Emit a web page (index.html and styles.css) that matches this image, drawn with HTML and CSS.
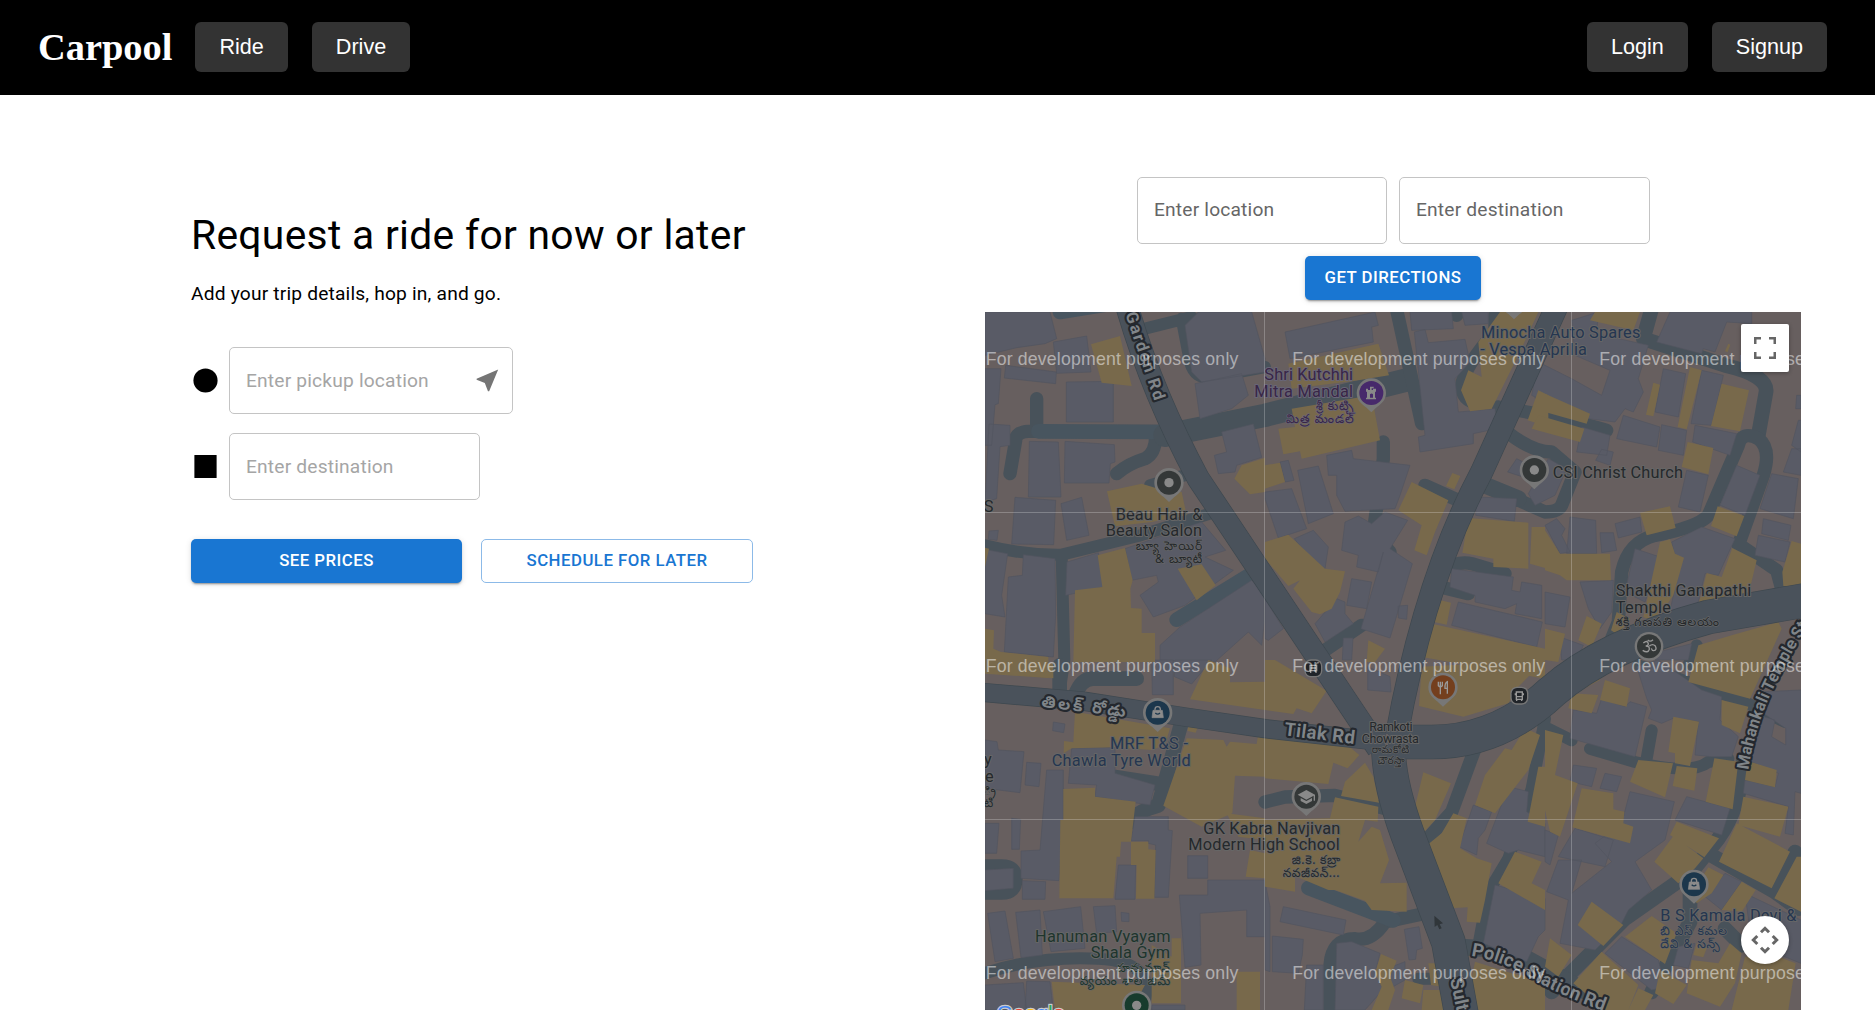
FILE: index.html
```html
<!DOCTYPE html>
<html lang="en">
<head>
<meta charset="utf-8">
<title>Carpool</title>
<link rel="stylesheet" href="styles.css">
</head>
<body>
<header class="navbar">
  <div class="nav-group">
    <h1 class="brand">Carpool</h1>
    <button class="nav-btn">Ride</button>
    <button class="nav-btn">Drive</button>
  </div>
  <div class="nav-group">
    <button class="nav-btn">Login</button>
    <button class="nav-btn">Signup</button>
  </div>
</header>
<main class="page">
  <section class="request">
    <h2 class="title">Request a ride for now or later</h2>
    <p class="subtitle">Add your trip details, hop in, and go.</p>
    <div class="field-row">
      <svg class="marker" viewBox="0 0 24 24"><circle cx="12" cy="12" r="10"/></svg>
      <div class="field field-pickup"><span class="placeholder">Enter pickup location</span>
        <svg class="near-me" viewBox="0 0 24 24"><path d="M21 3 3 10.53v.98l6.84 2.65L12.48 21h.98L21 3z"/></svg>
      </div>
    </div>
    <div class="field-row">
      <svg class="marker" viewBox="0 0 24 24"><path d="M2.8 2.5h18.4v19H2.8z"/></svg>
      <div class="field"><span class="placeholder">Enter destination</span></div>
    </div>
    <div class="actions">
      <button class="btn btn-filled">See prices</button>
      <button class="btn btn-outlined">Schedule for later</button>
    </div>
  </section>
  <section class="directions">
    <div class="direction-fields">
      <div class="field field-from"><span class="label">Enter location</span></div>
      <div class="field"><span class="label">Enter destination</span></div>
    </div>
    <button class="btn btn-filled btn-directions">Get directions</button>
    <div class="map">
      <svg class="map-canvas" viewBox="0 0 2448 2094">
        <defs>
          <path id="pin" d="M0-44a44 44 0 0 0-44 44c0 22 14 32 28 43L0 58 16 43C30 32 44 22 44 0A44 44 0 0 0 0-44z"/>
          <path id="bag" d="M-14-7h28l3 22h-34z"/>
          <path id="bag-handle" d="M-8-7v-3a8 8 0 0 1 16 0v3"/>
          <path id="police-line" d="M1458 1932Q1550 1945 1640 2000T1920 2120"/>
          <path id="mahankali-line" d="M2290 1374Q2310 1240 2370 1119T2520 860"/>
        </defs>

        <g class="lane">
          <path class="w40" d="M155 260V350M75 485L92 385Q92 360 130 358H540M395 485Q430 455 480 440Q512 425 512 370"/>
          <path class="w44 bright" d="M160 358L525 360M225 0L380-25M575 923L800 785"/>
          <path class="w70" d="M540 370L840 310L1140 235L1260 205"/>
          <path class="w36" d="M480 50L620 15M590 20L615 150Q630 205 680 195L840 165M495 520L600 490M0 700Q120 730 230 728L460 672L690 600M230 728L238 1044L225 1130"/>
          <path class="w40" d="M1232-20L1310 335M1195 390V440L1165 660L1215 720M1320 520L1420 565M1415-20V10M1530 10V60Q1440 160 1430 220Q1430 265 1480 275M1020 1015L1130 940"/>
          <path class="w40" d="M1560 355Q1640 420 1700 420L1770 480L1730 580Q1720 600 1680 600L1490 515M1540 285Q1750 320 1865 355M1345 820L1450 845M1370 775Q1420 745 1460 755L1560 785"/>
          <path class="w50" d="M1490 515L1600 560"/>
          <path class="w44" d="M2000-10L1975 80L2220 160Q2350 190 2343 240L2320 370M2180 1000"/>
          <path class="w40" d="M2260 700L2335 490Q2360 410 2320 380Q2270 355 2260 400L2170 610Q2140 645 2010 670Q1930 690 1910 780L1900 930L1860 1030M2265 700L2375 775L2390 830"/>
          <path class="w36" d="M2110 1060L2135 1000M1960 1060L2080 1100L2280 1170L2400 1230"/>
          <path class="w44" d="M224 1060V1150M270 1150Q290 1095 330 1100H455M590 1230L520 1480Q450 1500 440 1530M520 1415L390 1395"/>
          <path class="w36" d="M0 1660H50Q95 1660 95 1700Q95 1745 50 1745H0M-20 1990Q150 1930 340 1940T470 2094"/>
          <path class="w40" d="M840 1470L900 1455L1050 1450L1200 1490M1470 1310L1400 1500L1310 1600M1035 2094V1960Q1040 1880 1110 1880Q1160 1890 1200 1830L1340 1800"/>
          <path class="w44 bright" d="M970 1728L1225 1825"/>
          <path class="w36" d="M1680 1245L1760 1285M1815 1310L1950 1350Q2120 1390 2170 1350L2230 1340M2000 1255L1985 1340M1680 1220L1640 1430L1570 1640L1510 1740L1480 1900M1300 2000H1390"/>
          <path class="w44" d="M2275 1340Q2270 1480 2200 1580L2120 1680L1920 1820L1750 1990L1700 2040M2180 1630L2370 1740L2440 1790M2370 1740L2430 1620M2115 1700V1830L2000 2040M2220 1850L2270 1900"/>
          <path class="w50" d="M1430 1905L1580 1915L1700 1980L1900 2094"/>
        </g>

        <g class="grey">
          <path d="M0 0H195L215 80 180 95 95 107 0 130ZM205 90L305 72 318 180 215 184ZM62 160L214 180 212 215 58 198ZM0 170H48L40 275 30 278 20 400 0 400ZM244 210L385 208V330H244ZM12 336L75 340V400L45 404 35 560 0 570ZM133 388L220 390 228 555H130ZM240 388L388 398 390 450 376 455 372 513H238ZM90 556L212 565 206 698 80 696ZM228 575L290 556 312 670 245 685ZM12 657L40 655 36 685 10 682ZM0 712L68 725 50 850 60 915 0 905ZM115 728L210 740 212 910 205 1035 58 1020 70 795 112 790ZM246 750L340 722 356 825 242 850ZM420 710L650 630 722 715 660 735 745 775 690 815 640 850 600 880 505 915 465 850 520 810 515 790 440 805ZM600 40L640 0H800L840 140 840 180 650 210 620 180ZM630 215L770 185 790 250 740 290 645 320ZM710 360L805 336 830 436 755 460 750 480 700 485 688 430 725 420ZM585 945L800 805 838 840V930L830 1000 790 960 690 1050 525 1044V1000Z"/>
          <path transform="translate(840)" d="M60 60L330 0 340 40 320 45 325 90 75 140ZM435 0H560L565 50 440 55ZM590 0H670V35L600 40ZM448 60L480 52 490 92 600 82 615 150 570 200 580 300 690 290 695 350 625 365V395L465 420 460 375 480 370ZM185 430L260 415 265 440 435 460 405 550 390 590 240 598 215 550V490H190ZM0 540L80 530 125 650 40 678 0 560ZM98 475L160 462 205 605 130 635ZM45 450L70 445 87 505 60 510ZM240 630L280 612 320 635 360 600 428 625 375 710 442 755 375 978 288 950 355 720 340 780 275 765 280 730 230 715ZM88 680L145 655 190 705 180 770 160 775ZM260 800L320 810 305 890 245 880ZM215 860L240 870V905L265 935 180 990 150 935ZM400 882L428 880 425 922 400 918ZM235 978H264L260 1044H232ZM0 860L55 950 10 985 0 980ZM635 555L755 560 748 628 632 610ZM560 770L745 795 740 835 765 840 770 810 830 820V920L750 905 755 875 720 890 630 870V850L555 825ZM580 870L832 930 815 1005 560 940ZM755 440L815 470 790 500 728 480ZM795 180H840V290L815 280Z"/>
          <path transform="translate(1680)" d="M80 25L160 0 155 65 310 100 280 200 295 240 265 300 240 290 210 330 130 320 40 290-40 250-20 150 80 200 170 250 195 175 90 130ZM375 0L620 0V35L545 30 510 120 475 110 470 125 335 90ZM355 170L422 185 400 315 330 300ZM470 175L535 190 500 340 438 335ZM235 310L345 345 335 405 215 380ZM350 338L425 355 415 430 340 415ZM450 340L575 365 555 430 443 390ZM110 345L195 370 185 430 95 420ZM170 412L205 420 195 460 152 445ZM10 440L65 470 30 550-30 580-50 545ZM425 475L490 490 465 600 400 585ZM575 460L645 490 600 610 525 580ZM680 485L760 500 745 620 645 590ZM755 250H768V290H752ZM760 325H768V420L740 400ZM740 410H768V490L715 480ZM655 620L738 640 730 685 650 665ZM640 670L735 690 720 750 630 730ZM0 640L35 620 60 650 50 670 75 720 45 725ZM75 615L152 625 155 725H65ZM165 662H205L215 715 170 722ZM210 635L285 615 290 660 220 678ZM270 710L345 735 300 870 240 840ZM380 690L470 645 570 680 520 790 480 785 455 890 370 920 400 780ZM0 840L75 855 60 945 0 935ZM105 810L205 805 200 900 165 950 130 890ZM45 975L115 1000 95 1044H50ZM340 1020L440 995 430 1044H330Z"/>
          <path transform="translate(0 1044)" d="M205 186L240 192 236 218 203 212ZM0 240L36 245 40 270 117 275 105 398 0 385ZM125 307L168 310 162 380 120 375ZM185 330H235V475L222 662 108 655V573L165 570ZM260 265L390 262V340L510 375 495 435 330 410 335 375 250 370ZM80 475L107 478 103 568H80ZM0 490L42 490 35 580H0ZM0 630L85 625V685L0 692ZM112 662L182 665 180 718H112ZM400 615H452L450 718H390ZM450 470H550V510L562 512 550 712H508L512 555 490 550V542L438 543ZM608 587H668V655H608ZM583 705H668V660H840V830H785V750L645 760 648 915 600 922ZM8 760L60 753 85 895 30 905ZM92 757L165 750 172 885 108 893ZM175 755L287 740 300 865 198 875ZM325 740L390 737 395 815 335 820ZM408 757L432 760V785L410 784ZM0 975L115 968 125 1050H0ZM125 963L195 965 205 1050H120ZM500 1035H600V1050H500ZM500 0H565V104H502ZM570 0H680L620 72 568 50Z"/>
          <path transform="translate(840 1044)" d="M308 20L375 50 378 96 308 90ZM55 740L243 780 235 825 45 785ZM22 828L115 838 112 885 100 940 22 935ZM0 665L15 740V935L0 930ZM125 915H175V1050H118ZM215 850L260 845 345 880 330 940 420 905 420 960 340 1005 300 1050H210ZM418 808L462 800 472 865 455 870 452 898 432 900ZM625 435L680 455 660 510 640 535 635 585 582 560ZM730 380L790 395 785 455 840 490V590L760 570 730 580 665 550ZM690 675L840 715V810L820 830 785 905 655 850Z"/>
          <path transform="translate(1680 1044)" d="M85 150L155 160 170 115 240 140 255 125 305 140 270 290 75 235ZM275 20L340 0 470 90 530 110 525 180 580 230 560 290 500 290 450 285 460 185 385 175 350 190 310 175 320 150 305 115ZM660 95L768 90V400L750 395 745 525 720 520 730 440 595 400 600 360 690 380 700 340 605 300 620 160 690 180 680 230 722 255V205L640 150ZM85 315L155 325 140 380 75 365ZM180 340L230 350 215 395 165 385ZM255 395L388 425 360 540 270 605 320 690 250 750 230 790 150 870 45 850 70 720 5 695 40 600 110 600 80 700 200 605 150 550 230 490ZM0 510L40 525 15 615 0 605ZM90 505L205 540 180 620 40 590ZM425 410L555 445 530 525 390 480ZM375 600L430 640 400 670 365 630ZM540 640L590 665 530 750 480 710ZM230 830L340 900 360 980 320 990 180 880ZM600 700L768 780V910L620 850ZM400 860L450 850 430 925 385 915Z"/>
        </g>

        <g class="gold">
          <path d="M318 97L405 72 440 222 350 212ZM366 538L470 515 520 530 590 540 605 610 500 630 390 643ZM338 730L420 708 443 805 436 830 438 888 470 890V963H510V1050H265L270 835 352 825ZM578 770L650 757 692 820 635 865ZM0 707L12 710 0 765ZM0 950L27 955 25 1010 48 1020 190 1035V1098L0 1085ZM748 500L770 460 840 437V540L795 547Z"/>
          <path transform="translate(840)" d="M70 155L340 95 372 190 280 205 80 230ZM40 350L90 345 80 290 320 250 345 385 110 440 105 418 55 427ZM0 460L45 452 60 510 0 530ZM562 483L586 492 568 532 543 522ZM440 510L550 565 510 660 485 730 448 715 470 640 400 595ZM0 690L70 668 180 770 240 778 225 840 200 890 165 907 140 900 85 830 105 805 70 822 0 740ZM515 862L558 872 545 938 508 930ZM500 935L840 1010V1100L470 1035ZM310 985L360 1010 330 1050H305ZM610 618L790 632V770L685 765V740L592 722ZM800 645H840V768L795 755ZM705 0H820L760 130 680 290 615 298 588 235 610 175 650 195 640 90ZM820 235L850 250V345L788 325Z"/>
          <path transform="translate(1680)" d="M150 0H285L265 55 135 25ZM0 245L135 305 125 335 0 300ZM-20 310L118 350 105 390-40 350ZM325 212L345 218 325 313 303 308ZM435 165L470 175 425 352 398 345ZM530 215L612 235 585 358 498 342ZM428 390L505 408 490 487 410 465ZM285 602L375 583 392 648 305 670ZM518 583L598 612 575 673 498 642ZM345 690L375 682 390 725 417 737 385 850 330 930 295 915ZM562 708L635 745 610 850 540 870 460 880 485 783 530 795ZM740 687L768 695V825L715 822 712 780ZM0 655L45 725H195L198 805H65L45 790 0 775ZM125 912L170 935 140 1005 100 985ZM215 900L255 920 220 970 198 955ZM0 950L60 965 40 1050 0 1044ZM460 1000L560 970 700 930 710 950 615 1160 430 1110ZM550 95L556 98 548 120 540 118Z"/>
          <path transform="translate(0 1044)" d="M50 10H205V55L50 40ZM270 155L555 205 540 255 500 270 390 262 260 265 236 280 237 243 265 247ZM235 387L330 383V410L452 425 438 545 408 545 405 590 395 590 385 715H223L226 480H235ZM438 545H490V568L512 570 508 716H453L455 615H438ZM610 195L640 197 632 218 608 213ZM605 235L715 240 725 260 735 245 815 252 820 220 840 215V350L750 347 742 460 650 500 535 437ZM670 0L735 25V67L840 65V150L615 118ZM725 460L840 475V540L760 530ZM795 570L840 580V655L782 650ZM560 835H588V1030H500V855L560 890ZM755 935H825V1050H755ZM200 965L480 975 440 1050H210Z"/>
          <path transform="translate(840 1044)" d="M0 0H30L185 92 140 160 95 145 85 162 0 150ZM0 220L240 250 283 285 248 325 205 308 190 372 0 355ZM300 308L325 350 342 428 228 408 240 365ZM210 412L340 440 338 485 300 480 280 545 320 500 345 510 372 600 345 670 425 668 425 755 320 750 300 722 210 690 190 690 0 610V480L195 475ZM0 600L90 640V695L0 680ZM470 20L840 0 760 80 730 130 595 170 462 138ZM475 337L558 370 510 480 460 535 440 520 438 440H450ZM780 205L825 225 790 330 690 460 630 435 660 345 720 265 740 270ZM820 320H840V500L788 485ZM565 460L605 475 585 565 635 595 680 610 660 720 645 788 605 785 608 742 555 745 475 565 530 520ZM750 575L830 605 800 670 840 690V750L700 670ZM348 882L395 902 375 950 390 990 370 1050H320L350 980 330 940ZM420 960L475 975 465 1030 410 1015ZM490 910H515L530 980 498 975ZM475 990H545L550 1050H470ZM630 905L740 940 840 960V1050H600Z"/>
          <path transform="translate(1680 1044)" d="M90 55L150 25 165 60 110 90ZM80 100L160 105 140 160 70 145ZM180 60L255 85 245 140 165 120ZM530 120L610 140 585 220 530 195ZM385 170L462 185 435 318 390 310V280L370 275ZM0 210L55 225 30 345 98 370 45 530 15 515 0 450ZM280 300L384 310 360 412 255 365ZM395 318L457 325 448 392 383 378ZM508 295L580 305 563 448 482 425ZM608 303L695 330 690 382 600 360ZM110 385L205 400V448L238 455 235 490 265 500 255 550 82 502ZM595 410L730 440 705 530 580 495ZM395 485L522 535 478 592 375 525ZM385 528L475 595 450 625 400 670 328 605ZM575 490L735 575 680 685 522 605ZM755 590H768V755L688 715ZM490 622L535 645 500 700 455 730 440 700ZM590 665L632 690 590 755 530 750ZM140 725L235 795 175 858 98 795ZM320 768L395 820 360 912 240 830ZM15 835L80 885 40 950 0 920ZM170 875L280 975 250 1050H180L85 970ZM455 850L485 865 475 892 445 885ZM555 850L590 880 570 970 525 1040 425 1000 440 900 520 910ZM600 890H700L752 910 730 1050H560ZM345 930L425 975 385 1032 330 1000ZM280 985L325 1005 300 1050H250Z"/>
        </g>

        <g class="road-edge">
          <path class="w70" d="M425-20Q500 240 640 500L840 800 1040 1100 1180 1310"/>
          <path class="w70" d="M1735-60L1490 480Q1320 800 1235 1270"/>
          <path class="w58" d="M-20 1140L300 1168 600 1215 840 1250 1200 1290"/>
          <path class="w106" d="M1210 1290H1340Q1540 1290 1700 1140Q1860 1000 2170 915L2460 865"/>
          <path class="w106" d="M1210 1300Q1210 1420 1280 1600L1390 1890 1430 2110"/>
        </g>
        <g class="road">
          <path class="w68" d="M425-20Q500 240 640 500L840 800 1040 1100 1180 1310"/>
          <path class="w68" d="M1735-60L1490 480Q1320 800 1235 1270"/>
          <path class="w56" d="M-20 1140L300 1168 600 1215 840 1250 1200 1290"/>
          <path class="w104" d="M1210 1290H1340Q1540 1290 1700 1140Q1860 1000 2170 915L2460 865"/>
          <path class="w104" d="M1210 1300Q1210 1420 1280 1600L1390 1890 1430 2110"/>
        </g>
        <path class="arrow" d="M1348 1811l26 23-10 3 6 12-7 3-6-13-8 6z"/>

        <g class="pins">
          <use href="#pin" x="552" y="512"/><circle class="dark" cx="552" cy="512" r="36"/><circle class="light" cx="552" cy="512" r="14"/>
          <use href="#pin" x="1648" y="474"/><circle class="dark" cx="1648" cy="474" r="36"/><circle class="light" cx="1648" cy="474" r="14"/>
          <use href="#pin" x="1159" y="243"/><circle class="purple" cx="1159" cy="243" r="36"/>
          <path class="light" d="M1143 262v-5h3v-18h-3v-9h6v4h6v-10h11v5h-6v5h4v-4h9v9h-3v18h3v5zm12-5h9v-10q-4-5-9 0z"/>
          <use href="#pin" x="518" y="1202"/><circle class="navy" cx="518" cy="1202" r="36"/>
          <use href="#pin" x="2127" y="1717"/><circle class="navy" cx="2127" cy="1717" r="36"/>
          <use href="#pin" x="1374" y="1126"/><circle class="brown" cx="1374" cy="1126" r="36"/>
          <path class="line" d="M1360 1109v12q6 6 12 0v-12m-6 0v38m21-2v-36q-8 3-7 20h7"/>
          <use href="#pin" x="964" y="1454"/><circle class="dark" cx="964" cy="1454" r="36"/>
          <path class="light" d="M964 1434l26 14v18h-4v-15l-22 12-26-15zM947 1458l17 9 17-9v9l-17 9-17-9z"/>
          <circle cx="1992" cy="1003" r="43"/><circle class="dark" cx="1992" cy="1003" r="36"/>
          <path class="line" d="M1975 993q12-10 15 2 0 7-8 7 12 0 11 10-4 13-20 3m20-13q10-8 18 0 6 12-5 14-5 0-7-7m-11-25q8 7 16-1"/>
          <use href="#pin" x="455" y="2080"/><circle class="green" cx="455" cy="2080" r="36"/><circle class="light" cx="455" cy="2080" r="14"/>
          <use href="#pin" x="1587" y="-36"/><circle class="navy" cx="1587" cy="-36" r="36"/>
          <rect x="958" y="1042" width="54" height="54" rx="20"/><rect class="black" x="962" y="1046" width="46" height="46" rx="16"/>
          <rect x="1576" y="1124" width="54" height="54" rx="20"/><rect class="black" x="1580" y="1128" width="46" height="46" rx="16"/>
          <path class="line" d="M975 1060h20v16h-20zm0 8h20m-18 8v7m16-7v7M1594 1140h18v22h-18zm0 14h18m-21-10v6m24-6v6m-20 11v6m15-6v6"/>
          <g class="bag"><use href="#bag" x="518" y="1202"/><use href="#bag" x="2127" y="1717"/></g>
          <g class="bag-handle"><use href="#bag-handle" x="518" y="1202"/><use href="#bag-handle" x="2127" y="1717"/></g>
          <path class="bag-smile" d="M511 1203q7 7 14 0M2120 1718q7 7 14 0"/>
        </g>

        <g class="place">
          <text x="392" y="623" textLength="260">Beau Hair &amp;</text>
          <text x="362" y="673" textLength="289">Beauty Salon</text>
          <g class="telugu"><text x="452" y="714" textLength="200">బ్యూ హెయిర్</text><text x="510" y="752" textLength="142">&amp; బ్యూటీ</text></g>
          <text x="-30" y="599">LS</text>
          <text x="1703" y="498" textLength="391">CSI Christ Church</text>
          <text x="1892" y="852" textLength="407">Shakthi Ganapathi</text>
          <text x="1892" y="903" textLength="166">Temple</text>
          <text class="telugu" x="1892" y="943" textLength="310">శక్తి గణపతి ఆలయం</text>
          <text x="655" y="1565" textLength="411">GK Kabra Navjivan</text>
          <text x="610" y="1615" textLength="454">Modern High School</text>
          <g class="telugu"><text x="920" y="1656" textLength="146">జి.కె. కబ్రా</text><text x="893" y="1694" textLength="171">నవజీవన్...</text></g>
          <text x="-3" y="1360">y</text><text x="0" y="1409">e</text>
          <g class="telugu"><text x="-4" y="1450">్రి</text><text x="-4" y="1486">టి</text></g>
        </g>
        <g class="place junction">
          <text x="1153" y="1256" textLength="130">Ramkoti</text><text x="1130" y="1292" textLength="172">Chowrasta</text>
          <g class="telugu"><text x="1160" y="1324" textLength="113">రామకోటి</text><text x="1177" y="1356" textLength="82">చౌరస్తా</text></g>
        </g>
        <g class="place shop">
          <text x="1488" y="78" textLength="478">Minocha Auto Spares</text>
          <text x="1486" y="128" textLength="320">- Vespa Aprilia</text>
          <text x="375" y="1312" textLength="234">MRF T&amp;S -</text>
          <text x="200" y="1363" textLength="417">Chawla Tyre World</text>
          <text x="2026" y="1827" textLength="408">B S Kamala Devi &amp;</text>
          <g class="telugu"><text x="2026" y="1868" textLength="200">బి ఎస్ కమల</text><text x="2026" y="1907" textLength="178">దేవి &amp; సన్స్</text></g>
        </g>
        <g class="place culture">
          <text x="838" y="203" textLength="266">Shri Kutchhi</text>
          <text x="808" y="254" textLength="296">Mitra Mandal</text>
          <g class="telugu"><text x="993" y="294" textLength="112">శ్రీ కుట్చి</text><text x="903" y="333" textLength="203">మిత్ర మండల్</text></g>
        </g>
        <g class="place gym">
          <text x="150" y="1889" textLength="407">Hanuman Vyayam</text>
          <text x="317" y="1939" textLength="238">Shala Gym</text>
          <g class="telugu"><text x="396" y="1980" textLength="159">హనుమాన్</text><text x="284" y="2019" textLength="272">వ్యయం శాల జిమ్</text></g>
        </g>
        <g class="street">
          <text transform="translate(421 6) rotate(71.5)" textLength="276">Garden Rd</text>
          <text class="wide-street" transform="translate(896 1270) rotate(7)" textLength="213">Tilak Rd</text>
          <text class="street-telugu" transform="translate(168 1184) rotate(7)" textLength="254">తిలక్ రోడ్డు</text>
          <text class="wide-street" transform="translate(1395 2002) rotate(78)">Sultan Bazar</text>
          <text class="wide-street"><textPath href="#police-line">Police Station Rd</textPath></text>
          <text><textPath href="#mahankali-line">Mahankali Temple St</textPath></text>
        </g>

        <path class="tile-lines" d="M838.500 0V2094M1759.500 0V2094M0 601.500H2448M0 1522.500H2448"/>
        <g class="watermark">
          <text x="2" y="158" textLength="758">For development purposes only</text><text x="922" y="158" textLength="758">For development purposes only</text><text x="1843" y="158" textLength="758">For development purposes only</text>
          <text x="2" y="1080" textLength="758">For development purposes only</text><text x="922" y="1080" textLength="758">For development purposes only</text><text x="1843" y="1080" textLength="758">For development purposes only</text>
          <text x="2" y="2001" textLength="758">For development purposes only</text><text x="922" y="2001" textLength="758">For development purposes only</text><text x="1843" y="2001" textLength="758">For development purposes only</text>
        </g>
        <text class="google" x="35" y="2124"><tspan class="g-blue">G</tspan><tspan class="g-red">o</tspan><tspan class="g-yellow">o</tspan><tspan class="g-blue">g</tspan><tspan class="g-green">l</tspan><tspan class="g-red">e</tspan></text>
      </svg>
      <button class="map-control fullscreen" aria-label="Toggle fullscreen"><svg viewBox="0 0 22 22"><path d="M0 0h7v2.500H2.500V7H0zM15 0h7v7h-2.500V2.500H15zM0 15h2.500v4.500H7V22H0zM19.500 15H22v7h-7v-2.500h4.500z"/></svg></button>
      <button class="map-control camera" aria-label="Map camera controls"><svg viewBox="0 0 28 28"><path d="M10 6.300L14 2.300 18 6.300M10 21.700L14 25.700 18 21.700M6.300 10L2.300 14 6.300 18M21.700 10L25.700 14 21.700 18"/></svg></button>
    </div>
  </section>
</main>
</body>
</html>
```
FILE: styles.css
```css
* { box-sizing: border-box; }
body {
  margin: 0;
  height: 1010px;
  overflow: hidden;
  display: flex;
  flex-direction: column;
  background: #fff;
  color: #000;
  font-family: Roboto, sans-serif;
}
button { font: inherit; border: 0; margin: 0; }

.navbar {
  flex: none;
  height: 95px;
  padding: 0 48px 1px 38px;
  display: flex;
  align-items: center;
  justify-content: space-between;
  background: #000;
}
.nav-group { display: flex; align-items: center; gap: 24px; }
.brand {
  margin: 0 -1px 0 0;
  color: #fff;
  font: bold 38.400px "Liberation Serif", serif;
}
.nav-btn {
  height: 50px;
  padding: 0 24px;
  border-radius: 6px;
  background: #333;
  color: #fff;
  font: 21.600px "Liberation Sans", sans-serif;
}

.page { flex: 1; min-height: 0; display: flex; justify-content: space-between; padding: 82px 74px 0 191px; }
.request { width: 562px; padding-top: 33px; }
.title {
  margin: 0;
  font-size: 40.800px;
  line-height: 50.400px;
  font-weight: 400;
  letter-spacing: .00735em;
}
.subtitle { margin: 19px 0 39px; font-size: 19.200px; line-height: 29px; letter-spacing: .00938em; }
.field-row { display: flex; align-items: center; gap: 9px; margin-bottom: 19px; }
.marker { width: 29px; height: 29px; }
.field {
  width: 251px;
  height: 67px;
  padding: 0 16px;
  border: 1px solid #c4c4c4;
  border-radius: 5px;
  display: flex;
  align-items: center;
  justify-content: space-between;
  font-size: 19.200px;
  letter-spacing: .00938em;
}
.field-pickup { width: 284px; padding-right: 10px; }
.placeholder { color: #a5a5a5; }
.label { color: #666; }
.near-me { width: 28.800px; height: 28.800px; margin-bottom: 1px; fill: #757575; }
.actions { display: grid; grid-template-columns: 271px 272px; gap: 19px; margin-top: 39px; }
.btn {
  height: 44px;
  padding: 0 19px 2px;
  border-radius: 5px;
  font-size: 16.800px;
  font-weight: 500;
  letter-spacing: .02857em;
  text-transform: uppercase;
}
.btn-filled {
  background: #1976d2;
  color: #fff;
  box-shadow: 0 3px 1px -2px rgba(0,0,0,.2), 0 2px 2px rgba(0,0,0,.14), 0 1px 6px rgba(0,0,0,.12);
}
.btn-outlined { background: #fff; color: #1976d2; border: 1px solid #8cbae8; }

.directions { width: 816px; display: flex; flex-direction: column; align-items: center; }
.direction-fields { display: flex; gap: 12px; padding-left: 1px; }
.direction-fields .field { padding-bottom: 2px; }
.direction-fields .field-from { width: 250px; }
.btn-directions { width: 176px; margin: 12px 0; flex: none; }

.map { position: relative; width: 816px; height: 698px; flex: none; overflow: hidden; background: #675f5f; }
.map-canvas { display: block; width: 816px; height: 698px; }
.lane { fill: none; stroke: #48525a; stroke-linecap: round; stroke-linejoin: round; }
.road, .road-edge { fill: none; stroke-linejoin: round; }
.road { stroke: #4a525b; }
.road-edge { stroke: #3e484f; }
.bright { stroke: #48555f; }
.w36 { stroke-width: 36; } .w40 { stroke-width: 40; } .w44 { stroke-width: 44; } .w50 { stroke-width: 50; }
.w56 { stroke-width: 54; } .w58 { stroke-width: 58; } .w68 { stroke-width: 66; } .w70 { stroke-width: 70; }
.w104 { stroke-width: 100; } .w106 { stroke-width: 104; }
.grey { fill: #595b66; stroke: #51545f; stroke-width: 2; }
.gold { fill: #78694b; }
.arrow { fill: #30363a; }

.pins { fill: #777; }
.dark { fill: #343838; } .light { fill: #898989; } .purple { fill: #47296b; } .navy { fill: #1c374c; }
.brown { fill: #743f1e; } .green { fill: #173b2d; } .black { fill: #202429; }
.line { fill: none; stroke: #999; stroke-width: 4; }
.bag { fill: #8b8b8b; stroke: #8b8b8b; stroke-width: 2; stroke-linejoin: round; }
.bag-handle { fill: none; stroke: #8b8b8b; stroke-width: 4; }
.bag-smile { fill: none; stroke: #1c374c; stroke-width: 4; }

.place { font: 49px Roboto, sans-serif; fill: #25292c; stroke: #666; stroke-width: 6; stroke-linejoin: round; paint-order: stroke; }
.telugu { font: 37px "Noto Sans Telugu", "Noto Sans", sans-serif; stroke-width: 4; }
.junction { font-size: 38px; }
.junction .telugu { font-size: 31px; }
.shop { fill: #253650; }
.culture { fill: #382647; stroke: #686577; }
.gym { fill: #1e352d; }
.street { font: bold 50px Roboto, sans-serif; fill: #808589; stroke: #24282e; stroke-width: 13; stroke-linejoin: round; paint-order: stroke; }
.wide-street { font-size: 56px; }
.street-telugu { font: bold 48px "Noto Sans Telugu", "Noto Sans", sans-serif; }
.tile-lines { fill: none; stroke: rgba(255,255,255,.24); stroke-width: 3; }
.watermark { font: 53px "Liberation Sans", sans-serif; fill: rgba(255,255,255,.5); }
.google { font: 63px "Liberation Sans", sans-serif; stroke: #ccc; stroke-width: 7; paint-order: stroke; }
.g-blue { fill: #4285f4; } .g-red { fill: #e94235; } .g-yellow { fill: #fabb05; } .g-green { fill: #34a853; }

.map-control {
  position: absolute;
  right: 12px;
  width: 48px;
  height: 48px;
  padding: 0;
  display: grid;
  place-items: center;
  background: #fff;
  box-shadow: 0 1px 4px rgba(0,0,0,.3);
}
.fullscreen { top: 12px; border-radius: 2px; }
.fullscreen svg { width: 22px; height: 22px; fill: #666; }
.camera { top: 604px; border-radius: 50%; }
.camera svg { width: 28px; height: 28px; fill: none; stroke: #666; stroke-width: 3; }
```
